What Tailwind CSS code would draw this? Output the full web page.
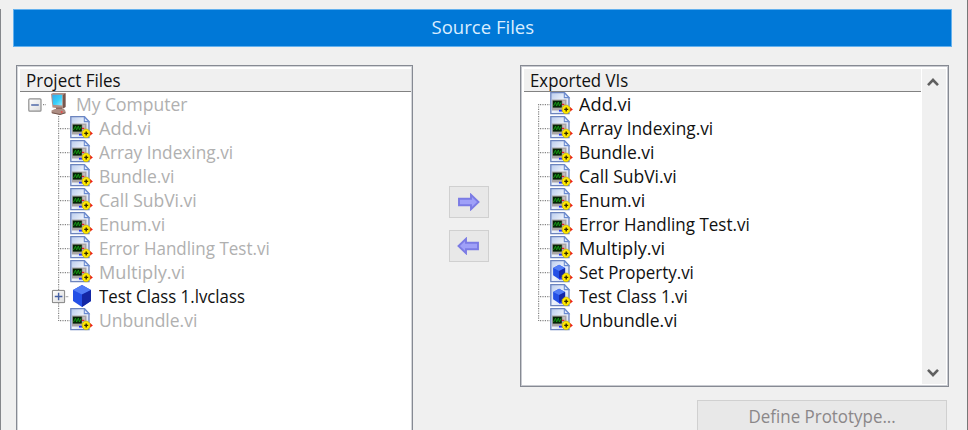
<!DOCTYPE html>
<html lang="en">
<head>
<meta charset="utf-8">
<title>Source Files</title>
<script src="https://cdn.jsdelivr.net/npm/@tailwindcss/browser@4"></script>
</head>
<body class="w-[968px] h-[430px] overflow-hidden bg-[#f0f0f0] font-['Open_Sans','Noto_Sans',sans-serif] text-[17.5px] leading-6 text-[#111]">
<svg class="absolute h-0 w-0" width="0" height="0">
  <defs>
    <linearGradient id="paper" x1="0" y1="0" x2="1" y2="1"><stop offset="0" stop-color="#b9cbed"/><stop offset=".5" stop-color="#eef3fc"/><stop offset="1" stop-color="#c3d2ef"/></linearGradient>
    <linearGradient id="screen" x1="0" y1="0" x2="1" y2="1"><stop offset="0" stop-color="#3aa8ea"/><stop offset=".55" stop-color="#35d0fa"/><stop offset="1" stop-color="#9cecff"/></linearGradient>
    <linearGradient id="box" x1="0" y1="0" x2="1" y2="1"><stop offset="0" stop-color="#fff"/><stop offset="1" stop-color="#dcdcdc"/></linearGradient>
    <symbol id="page" viewBox="0 0 24 24">
      <path d="M.8.7H14.5L19 5.5V21.7H.8Z" fill="url(#paper)" stroke="#6c84be" stroke-width="1.3"/>
      <path d="M14.3.8V5.6H19Z" fill="#dfe9fb" stroke="#6c8cd0" stroke-width="1.1"/>
    </symbol>
    <symbol id="badge" viewBox="0 0 24 24">
      <path d="M9 18.7H13" stroke="#2030ff" stroke-width="1.7"/>
      <path d="M19.5 14.6L22.9 17.4L19.5 20Z" fill="#f01818"/>
      <path d="M14.6 13.2H17.6L20 15.6V19.2L17.6 21.6H14.6L12.2 19.2V15.6Z" fill="#ffe800" stroke="#c8b800" stroke-width=".7"/>
      <path d="M14.2 17.4H18.2M16.2 15.4V19.4" stroke="#332c00" stroke-width="1.4"/>
    </symbol>
    <symbol id="vi" viewBox="0 0 24 24">
      <use href="#page"/>
      <rect x="2" y="7.5" width="14.5" height="11" fill="#aaa5a7"/>
      <rect x="2.8" y="8.6" width="9" height="7" fill="#062406"/>
      <path d="M3.5 14L5.5 10.2L6.6 14L8.4 10L9.4 14L11 10.5" fill="none" stroke="#169616" stroke-width="1"/>
      <path d="M13 10H15M13 12H15" stroke="#d9d5d7"/>
      <use href="#badge"/>
      <path d="M12 12.4H14.3" stroke="#e32222" stroke-width="1.2"/>
    </symbol>
    <symbol id="cube" viewBox="0 0 20 24">
      <path d="M10 1L19 6V17L10 23L1 17V6Z" fill="#2450e6"/>
      <path d="M10 1L19 6L10 10.5L1 6Z" fill="#527df6"/>
      <path d="M10 10.5L19 6V17L10 23Z" fill="#1427a5"/>
    </symbol>
    <symbol id="cls" viewBox="0 0 24 24">
      <use href="#page"/>
      <use href="#cube" x="1.6" y="4" width="15" height="16"/>
      <use href="#badge"/>
    </symbol>
    <symbol id="pc" viewBox="0 0 18 24">
      <path d="M1 2L3 1H15.5V15L12 17L2.5 15.5Z" fill="#b29086"/>
      <path d="M13 3L15.5 1V15L13 16.5Z" fill="#76574f"/>
      <path d="M2.2 2.8H12.2V13.6L3 12.8Z" fill="url(#screen)"/>
      <path d="M6 15.5H12L12.5 18H6Z" fill="#8d6a61"/>
      <path d="M1.5 18.5L5 17H14L15.5 19V21L10 22.8L1.5 21Z" fill="#ae8e84"/>
      <path d="M2 20.8L10 22.5L15.5 20.7" fill="none" stroke="#76574f" stroke-width="1.1"/>
      <circle cx="11.7" cy="20" r="1" fill="#ef4a4a"/>
    </symbol>
    <symbol id="minus" viewBox="0 0 14 14">
      <rect x=".8" y=".8" width="12.2" height="12.4" rx="1" fill="url(#box)" stroke="#909090" stroke-width="1.2"/>
      <path d="M3.2 7H10.8" stroke="#4560a4" stroke-width="1.4"/>
    </symbol>
    <symbol id="plus" viewBox="0 0 14 14">
      <use href="#minus"/>
      <path d="M7 3.2V10.8" stroke="#4560a4" stroke-width="1.4"/>
    </symbol>
  </defs>
</svg>

<div class="flex h-full w-full">
  <div class="mt-[9px] w-px bg-[#85878b]"></div>
  <main class="flex-1 pt-[9px]">
    <h1 class="ml-3 flex h-[38px] w-[939px] items-center justify-center border border-[#64b1ee] bg-[#0078d7] pb-[3px] text-[18px] text-[#d9edff]"><span data-w="103" class="inline-block origin-center whitespace-nowrap">Source Files</span></h1>
    <div class="mt-[18px] flex items-start pl-[15px]">
      <section class="h-[380px] w-[397px] border border-[#868a93] bg-white shadow-[inset_0_0_0_1px_#d4d6da]">
        <div class="mt-[3px] ml-[3px] flex h-[23px] w-[391px] border-b-[1.5px] border-[#828282] bg-[#f0f0f0] pl-[6px]"><span data-w="95" class="inline-block h-[22px] origin-left whitespace-nowrap leading-[23px]">Project Files</span></div>
        <div id="project"></div>
      </section>
      <div class="mt-[121px] ml-[36px] flex w-[40px] flex-col gap-3">
        <button class="flex h-8 w-10 items-center justify-center border border-[#d0d0d0] bg-[#e8e8e8]"><svg width="22" height="18" viewBox="0 0 22 18"><path d="M1 5.8H13V1.8L20.5 9L13 16.2V12.2H1Z" fill="#9fa0f8" stroke="#7b7be4" stroke-width="1.9"/></svg></button>
        <button class="flex h-8 w-10 items-center justify-center border border-[#d0d0d0] bg-[#e8e8e8] pr-[3px]"><svg width="22" height="18" viewBox="0 0 22 18"><path d="M21 5.8H9V1.8L1.5 9L9 16.2V12.2H21Z" fill="#9fa0f8" stroke="#7b7be4" stroke-width="1.9"/></svg></button>
      </div>
      <div class="ml-[31px] flex flex-col items-end">
        <section class="flex h-[322px] w-[429px] border border-[#868a93] bg-white pt-[3px] pr-[2px] pb-[2px] pl-[3px] shadow-[inset_0_0_0_1px_#c8cad0]">
          <div class="w-[397px]">
            <div class="flex h-[23px] border-b-[1.5px] border-[#828282] bg-[#f0f0f0] pl-[6px]"><span data-w="98" class="inline-block h-[22px] origin-left whitespace-nowrap leading-[23px]">Exported VIs</span></div>
            <div id="exported"></div>
          </div>
          <div class="ml-px flex flex-1 flex-col items-center justify-between bg-[#f0f0f0] pt-[8px] pr-[2px] pb-[6px]">
            <svg width="12" height="10" viewBox="0 0 12 10"><path d="M1 8.2L6 3L11 8.2" fill="none" stroke="#606060" stroke-width="2.6"/></svg>
            <svg width="12" height="10" viewBox="0 0 12 10"><path d="M1 1.8L6 7L11 1.8" fill="none" stroke="#606060" stroke-width="2.6"/></svg>
          </div>
        </section>
        <button class="mt-[13px] mr-[2px] flex h-[34px] w-[250px] items-start justify-center border border-[#d0d0d0] bg-[#e8e8e8] pt-[3px] text-[#8b8789]"><span data-w="147" class="inline-block origin-center whitespace-nowrap">Define Prototype...</span></button>
      </div>
    </div>
  </main>
  <div class="w-px bg-[#777]"></div>
</div>

<script>
const project = [
  ['pc', 'My Computer', 111], ['vi', 'Add.vi', 52], ['vi', 'Array Indexing.vi', 134], ['vi', 'Bundle.vi', 75],
  ['vi', 'Call SubVi.vi', 98], ['vi', 'Enum.vi', 66], ['vi', 'Error Handling Test.vi', 171], ['vi', 'Multiply.vi', 86],
  ['cube', 'Test Class 1.lvclass', 146], ['vi', 'Unbundle.vi', 98]
];
const exported = [
  ['vi', 'Add.vi', 52], ['vi', 'Array Indexing.vi', 134], ['vi', 'Bundle.vi', 75], ['vi', 'Call SubVi.vi', 98],
  ['vi', 'Enum.vi', 66], ['vi', 'Error Handling Test.vi', 171], ['vi', 'Multiply.vi', 86],
  ['cls', 'Set Property.vi', 115], ['cls', 'Test Class 1.vi', 109], ['vi', 'Unbundle.vi', 98]
];
const dots = 'stroke="#858585" stroke-width="1.2" stroke-dasharray="1.2 1.2"';
const label = (t, w, c) => `<span data-w="${w}" class="inline-block origin-left whitespace-nowrap ${c}">${t}</span>`;
// Draws the dotted connector in front of a tree item
const branch = (first, last) => `<svg class="shrink-0" width="20" height="24"><path d="M8.6 ${first ? 12 : 0}V${last ? 13 : 24}M10 12.6H20" fill="none" ${dots}/></svg>`;

document.getElementById('project').innerHTML = project.map(([icon, text, w], i) => {
  if (icon === 'pc') return `<div class="flex h-6 pl-[11px]"><svg class="mt-[6px] shrink-0" width="14" height="14"><use href="#minus"/></svg><svg class="shrink-0" width="8" height="24"><path d="M1 12.6H4" ${dots}/></svg><svg class="mr-[8px] shrink-0" width="18" height="24"><use href="#pc"/></svg>${label(text, w, 'text-[#b0b0b0]')}</div>`;
  if (icon === 'cube') return `<div class="flex h-6 pl-[33px]"><svg class="shrink-0" width="22" height="24"><path d="M8.6 0V24M14 12.6H19" fill="none" ${dots}/><use href="#plus" x="1.6" y="5.5" width="14" height="14"/></svg><svg class="mr-[7px] shrink-0" width="20" height="24"><use href="#cube"/></svg>${label(text, w, 'text-[#111]')}</div>`;
  return `<div class="flex h-6 pl-[33px]">${branch(false, i === project.length - 1)}<svg class="mr-[5px] shrink-0" width="24" height="24"><use href="#vi"/></svg>${label(text, w, 'text-[#b0b0b0]')}</div>`;
}).join('');
document.getElementById('exported').innerHTML = exported.map(([icon, text, w], i) =>
  `<div class="flex h-6 pl-[6px]">${branch(i === 0, i === exported.length - 1)}<svg class="mr-[5px] shrink-0" width="24" height="24"><use href="#${icon}"/></svg>${label(text, w, 'text-[#111]')}</div>`
).join('');
// Condense each label to its nominal width, again whenever its layout size changes
const fit = e => { e.style.transform = `scaleX(${e.dataset.w / e.offsetWidth})`; };
const observer = new ResizeObserver(list => list.forEach(x => fit(x.target)));
document.querySelectorAll('[data-w]').forEach(e => observer.observe(e));
window.addEventListener('load', () => document.querySelectorAll('[data-w]').forEach(fit));
</script>
</body>
</html>
